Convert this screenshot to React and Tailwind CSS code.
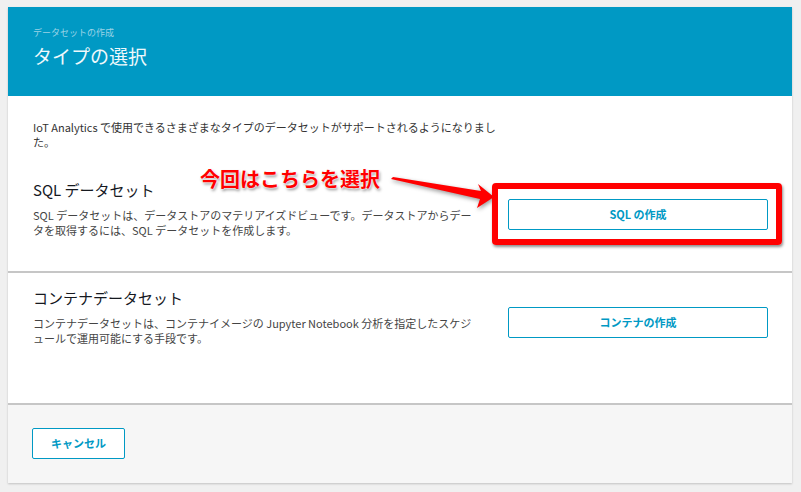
import React from 'react';

const font = { fontFamily: '"Noto Sans CJK JP", "Noto Sans", sans-serif' };

const Section = ({ title, lines, button, className }) => (
  <div className={`flex pl-[25px] pr-[24px] ${className}`}>
    <div className="w-[460px]">
      <h3 className="text-[15px] leading-[20px] text-[#16191f]">{title}</h3>
      <p className="mt-[8px] text-[11px] leading-[15px] text-[#444]">
        {lines.map((l, i) => (
          <span key={i} className="block">{l}</span>
        ))}
      </p>
    </div>
    <div className="ml-auto pt-[19px]">
      <button className="w-[260px] h-[31px] border border-[#0099c4] rounded-[2px] bg-white text-[11px] font-bold text-[#0099c4]">
        {button}
      </button>
    </div>
  </div>
);

export default function App() {
  return (
    <div className="relative h-[492px] w-[801px] overflow-hidden bg-[#f0f0f0] pt-[7px] pl-[8px] pr-[9px]" style={font}>
      <div className="bg-white shadow-[0_1px_2px_rgba(0,0,0,0.2)]">
        {/* header */}
        <div className="h-[89px] bg-[#0099c4] px-[25px] pt-[20px]">
          <div className="text-[9px] leading-[12px] text-[#9bd3e6]">データセットの作成</div>
          <h1 className="mt-[4px] text-[19px] leading-[26px] text-[#eef8fb]">タイプの選択</h1>
        </div>

        {/* intro + SQL */}
        <div className="h-[177px] border-b-2 border-[#c6c6c6]">
          <p className="px-[25px] pt-[24px] text-[11px] leading-[15px] text-[#333]">
            <span className="block">IoT Analytics で使用できるさまざまなタイプのデータセットがサポートされるようになりまし</span>
            <span className="block">た。</span>
          </p>
          <Section
            className="mt-[30px]"
            title="SQL データセット"
            lines={['SQL データセットは、データストアのマテリアイズドビューです。データストアからデー', 'タを取得するには、SQL データセットを作成します。']}
            button="SQL の作成"
          />
        </div>

        {/* container */}
        <div className="h-[132px] border-b-2 border-[#c6c6c6] pt-[15px]">
          <Section
            title="コンテナデータセット"
            lines={['コンテナデータセットは、コンテナイメージの Jupyter Notebook 分析を指定したスケジ', 'ュールで運用可能にする手段です。']}
            button="コンテナの作成"
          />
        </div>

        {/* footer */}
        <div className="h-[78px] bg-[#f6f6f6] px-[24px] pt-[23px]">
          <button className="w-[93px] h-[31px] border border-[#0099c4] rounded-[2px] bg-white text-[11px] font-bold text-[#0099c4]">
            キャンセル
          </button>
        </div>
      </div>

      {/* annotation */}
      <div
        className="absolute left-[200px] top-[166px] text-[20px] font-bold leading-[26px] text-[#ff0000]"
        style={{ textShadow: '0 0 2px #fff, 0 0 2px #fff, 1px 2px 3px rgba(0,0,0,0.45)' }}
      >
        今回はこちらを選択
      </div>
      <svg className="absolute left-0 top-0" width="801" height="492" style={{ filter: 'drop-shadow(1px 2px 2px rgba(0,0,0,0.4))' }}>
        <polygon points="391,179 393,177 481,191 478,184 494,197 477,208 480,199" fill="#ff0000" />
      </svg>
      <div className="absolute left-[492px] top-[183px] h-[62px] w-[290px] rounded-[4px] border-[6px] border-[#ff0000] shadow-[1px_2px_3px_rgba(0,0,0,0.45)]" />
    </div>
  );
}
